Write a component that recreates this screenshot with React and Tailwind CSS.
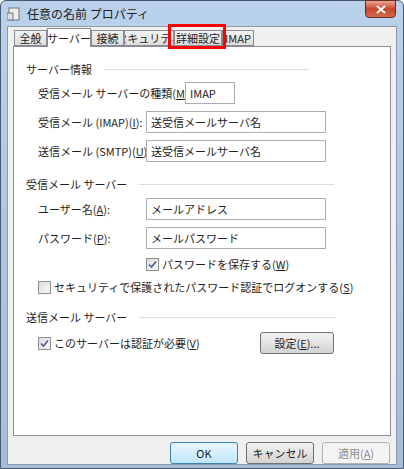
const font = { fontFamily: '"Noto Sans CJK JP", "Noto Sans", sans-serif' }

function U({ children }) {
  return <span className="underline">{children}</span>
}

function Field({ w = 'w-[180px]', value }) {
  return (
    <div className={`${w} h-[22px] shrink-0 border border-[#abadb3] bg-white flex items-center px-1 text-[11px] text-[#222] whitespace-nowrap`}>{value}</div>
  )
}

function Check({ checked }) {
  return (
    <div className="w-[13px] h-[13px] shrink-0 border border-[#8f8f8f] bg-gradient-to-br from-[#dcdcdc] to-[#fafafa] flex items-center justify-center mr-[3px]">
      {checked && (
        <svg width="9" height="9" viewBox="0 0 9 9"><path d="M1 4.5 L3.5 7 L8 1.5" fill="none" stroke="#4a5f97" strokeWidth="1.6" /></svg>
      )}
    </div>
  )
}

function Header({ text, line }) {
  return (
    <div className="flex items-center h-[20px] pl-[12px] whitespace-nowrap">
      <span>{text}</span>
      <div className={`ml-[12px] h-px bg-[#d5dfe5] ${line}`} />
    </div>
  )
}

function Row({ label, children, labelW = 'w-[108px]' }) {
  return (
    <div className="flex items-center h-[22px] pl-[24px] whitespace-nowrap">
      <span className={`${labelW} shrink-0`}>{label}</span>
      {children}
    </div>
  )
}

function Btn({ children, w, cls = '' }) {
  return (
    <div className={`${w} h-[22px] shrink-0 rounded-[3px] border flex items-center justify-center text-[11px] whitespace-nowrap ${cls}`}>{children}</div>
  )
}

function Tab({ children, w, sel }) {
  return (
    <div className={`${w} ${sel ? 'h-[19px] bg-white border-b-0 z-10 -mb-px' : 'h-[16px] bg-gradient-to-b from-[#f2f2f2] to-[#dedede]'} shrink-0 border border-[#898c95] flex items-center justify-center text-[11px] whitespace-nowrap overflow-hidden`}>{children}</div>
  )
}

export default function App() {
  return (
    <div style={font} className="w-[404px] h-[469px] bg-gradient-to-b from-[#b9d1ea] to-[#a4bdd8] rounded-t-[6px] border border-[#4b5b6d] flex flex-col text-[11px] text-[#1e1e1e]">
      <div className="h-[25px] flex items-center pl-[6px] relative shrink-0">
        <svg width="14" height="14" viewBox="0 0 14 14" className="mr-[6px]"><rect x="2" y="1" width="10" height="12" fill="#eee" stroke="#777" /><rect x="0" y="6" width="6" height="7" fill="#ddd" stroke="#777" /></svg>
        <span className="text-[12px] text-[#222]">任意の名前 プロパティ</span>
        <div className="absolute right-[7px] top-[-1px] w-[31px] h-[18px] rounded-b-[4px] border border-[#6d2a22] bg-gradient-to-b from-[#e8a493] via-[#c9452b] to-[#d16a4e] flex items-center justify-center">
          <svg width="10" height="9" viewBox="0 0 10 9"><path d="M1 1 L9 8 M9 1 L1 8" stroke="white" strokeWidth="2" /></svg>
        </div>
      </div>
      <div className="flex-1 mx-[6px] mb-[6px] bg-[#f0f0f0] border border-[#8f9aa8] flex flex-col px-[5px]">
        <div className="flex items-end h-[19px] shrink-0 pl-[1px] relative">
          <Tab w="w-[33px]">全般</Tab>
          <Tab w="w-[44px]" sel>サーバー</Tab>
          <Tab w="w-[33px]">接続</Tab>
          <Tab w="w-[50px]">セキュリティ</Tab>
          <Tab w="w-[48px]">詳細設定</Tab>
          <Tab w="w-[32px]">IMAP</Tab>
          <div className="absolute left-[155px] top-[-3px] w-[58px] h-[25px] border-[3px] border-[#ff0000] z-20" />
        </div>
        <div className="h-[390px] shrink-0 bg-white border border-[#898c95] flex flex-col pt-[12px]">
          <Header text="サーバー情報" line="w-[205px]" />
          <div className="h-[3px]" />
          <Row label={<>受信メール サーバーの種類(<U>M</U>):</>} labelW="w-[147px]"><Field w="w-[50px]" value="IMAP" /></Row>
          <div className="h-[7px]" />
          <Row label={<>受信メール (IMAP)(<U>I</U>):</>}><Field value="送受信メールサーバ名" /></Row>
          <div className="h-[7px]" />
          <Row label={<>送信メール (SMTP)(<U>U</U>):</>}><Field value="送受信メールサーバ名" /></Row>
          <div className="h-[12px]" />
          <Header text="受信メール サーバー" line="w-[195px]" />
          <div className="h-[4px]" />
          <Row label={<>ユーザー名(<U>A</U>):</>}><Field value="メールアドレス" /></Row>
          <div className="h-[7px]" />
          <Row label={<>パスワード(<U>P</U>):</>}><Field value="メールパスワード" /></Row>
          <div className="h-[4px]" />
          <div className="flex items-center h-[22px] pl-[132px] whitespace-nowrap"><Check checked />パスワードを保存する(<U>W</U>)</div>
          <div className="flex items-center h-[22px] pl-[24px] mt-[1px] whitespace-nowrap"><Check />セキュリティで保護されたパスワード認証でログオンする(<U>S</U>)</div>
          <div className="h-[9px]" />
          <Header text="送信メール サーバー" line="w-[197px]" />
          <div className="h-[5px]" />
          <div className="flex items-center h-[22px] pl-[24px] whitespace-nowrap">
            <Check checked />このサーバーは認証が必要(<U>V</U>)
            <div className="flex-1" />
            <Btn w="w-[74px]" cls="mr-[56px] border-[#707070] bg-gradient-to-b from-[#f2f2f2] to-[#d4d4d4]">設定(<U>E</U>)...</Btn>
          </div>
        </div>
        <div className="flex justify-end gap-[8px] mt-[6px] pr-[1px]">
          <Btn w="w-[68px]" cls="border-[#3c7fb1] bg-gradient-to-b from-[#eaf6fd] to-[#bee6fd]">OK</Btn>
          <Btn w="w-[68px]" cls="border-[#707070] bg-gradient-to-b from-[#f2f2f2] to-[#d4d4d4]">キャンセル</Btn>
          <Btn w="w-[68px]" cls="border-[#adb2b5] bg-[#f4f4f4] text-[#8d8d8d]">適用(<U>A</U>)</Btn>
        </div>
      </div>
    </div>
  )
}
